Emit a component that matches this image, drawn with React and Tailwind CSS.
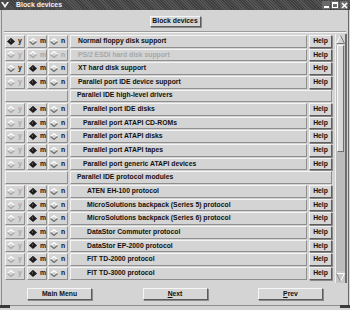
import React from 'react';

const rows = [
  { label: 'Normal floppy disk support', sel: 'y', yOn: true },
  { label: 'PS/2 ESDI hard disk support', sel: null, off: true },
  { label: 'XT hard disk support', sel: 'm', yOn: true },
  { label: 'Parallel port IDE device support', sel: 'm' },
  { header: 'Parallel IDE high-level drivers' },
  { label: 'Parallel port IDE disks', sel: 'm', lvl: 1 },
  { label: 'Parallel port ATAPI CD-ROMs', sel: 'm', lvl: 1 },
  { label: 'Parallel port ATAPI disks', sel: 'm', lvl: 1 },
  { label: 'Parallel port ATAPI tapes', sel: 'm', lvl: 1 },
  { label: 'Parallel port generic ATAPI devices', sel: 'm', lvl: 1 },
  { header: 'Parallel IDE protocol modules' },
  { label: 'ATEN EH-100 protocol', sel: 'm', lvl: 2 },
  { label: 'MicroSolutions backpack (Series 5) protocol', sel: 'm', lvl: 2 },
  { label: 'MicroSolutions backpack (Series 6) protocol', sel: 'm', lvl: 2 },
  { label: 'DataStor Commuter protocol', sel: 'm', lvl: 2 },
  { label: 'DataStor EP-2000 protocol', sel: 'm', lvl: 2 },
  { label: 'FIT TD-2000 protocol', sel: 'm', lvl: 2 },
  { label: 'FIT TD-3000 protocol', sel: 'm', lvl: 2 },
];

const indent = ['pl-[7px]', 'pl-[12px]', 'pl-[16px]'];

// motif-ish etched box
const box = 'border border-t-[#f4f4f4] border-l-[#f4f4f4] border-b-[#8e8e8e] border-r-[#8e8e8e]';

function Diamond({ on, dim }) {
  if (on) {
    return (
      <svg width="8" height="7" viewBox="0 0 8 7" className="shrink-0">
        <polygon points="4,0 8,3.5 4,7 0,3.5" fill="#1c1c1c" />
        <polyline points="0.5,3.5 4,0.5 7.5,3.5" fill="none" stroke="#3a3a3a" strokeWidth="1" />
        <rect x="3" y="2.5" width="1" height="1" fill="#8a8a8a" />
      </svg>
    );
  }
  return (
    <svg width="8" height="7" viewBox="0 0 8 7" className="shrink-0">
      <polygon points="4,0.5 7.5,3.5 4,6.5 0.5,3.5" fill="#d4d4d4" />
      <polyline points="0.5,3.5 4,0.5 7.5,3.5" fill="none" stroke="#ffffff" strokeWidth="1.1" />
      <polyline points="0.5,3.5 4,6.5 7.5,3.5" fill="none" stroke={dim ? '#a4a4a4' : '#6c6c6c'} strokeWidth="1.1" />
    </svg>
  );
}

function Opt({ letter, on, dim }) {
  return (
    <div className={`w-[20px] shrink-0 flex items-center gap-[3px] pl-[1px] ${box}`}>
      <Diamond on={on} dim={dim} />
      <span className={dim ? 'text-[#a6a6a6]' : 'text-[#111]'}>{letter}</span>
    </div>
  );
}

function Btn({ children, className = '' }) {
  return (
    <div
      className={`shrink-0 flex items-center justify-center bg-[#d6d6d6] border border-t-[#f6f6f6] border-l-[#f6f6f6] border-b-[#5c5c5c] border-r-[#5c5c5c] shadow-[1px_1px_0_#8a8a8a] text-[#111] ${className}`}
    >
      {children}
    </div>
  );
}

export default function App() {
  return (
    <div className="w-[350px] h-[310px] bg-[#d4d4d4] flex flex-col overflow-hidden font-['Liberation_Sans',Arial,sans-serif] font-bold text-[6.8px] leading-none select-none">
      {/* title bar */}
      <div className="h-[10px] shrink-0 flex items-center bg-[repeating-linear-gradient(45deg,#3e3e3e_0,#3e3e3e_1px,#575757_1px,#575757_2px)]">
        <div className="w-[10px] h-[10px] flex items-center justify-center bg-[#4a4a4a]">
          <svg width="8" height="6" viewBox="0 0 8 6">
            <polygon points="0,0 2,0 4,3 6,0 8,0 4,6" fill="#f4f4f4" />
          </svg>
        </div>
        <span className="ml-[5px] text-[#f2f2f2] text-[6.9px] bg-[#4a4a4a] px-[1px]">Block devices</span>
        <div className="ml-auto flex gap-[1px] mr-[2px]">
          <div className="w-[8px] h-[8px] bg-[#6a6a6a] flex items-end justify-center pb-[1px]">
            <div className="w-[5px] h-[2px] bg-white" />
          </div>
          <div className="w-[8px] h-[8px] bg-[#6a6a6a] flex items-center justify-center">
            <div className="w-[6px] h-[6px] border border-white border-t-2" />
          </div>
          <div className="w-[8px] h-[8px] bg-[#6a6a6a] flex items-center justify-center">
            <svg width="7" height="7" viewBox="0 0 7 7">
              <path d="M1 1 L6 6 M6 1 L1 6" stroke="#fff" strokeWidth="1.6" />
            </svg>
          </div>
        </div>
      </div>

      <div className="flex-1 flex flex-col border-l border-r border-l-[#8c8c8c] border-r-[#6a6a6a] mx-[1px]">
        {/* top button */}
        <div className="flex justify-center mt-[6px]">
          <Btn className="w-[51px] h-[11px]">Block devices</Btn>
        </div>
        <div className="mt-[4px] border-t border-t-[#9a9a9a] border-b border-b-[#f4f4f4] mx-[2px]" />

        {/* rows + scrollbar */}
        <div className="flex mt-[1px] h-[249px] pl-[3px] pr-[1px]">
          <div className="flex-1 min-w-0 flex flex-col gap-[1px] pt-[1px]">
            {rows.map((r, i) =>
              r.header ? (
                <div key={i} className="h-[12.65px] shrink-0 flex gap-[2px]">
                  <div className={`w-[63px] shrink-0 ${box}`} />
                  <div className={`flex-1 flex items-center pl-[6px] text-[#111] ${box}`}>
                    {r.header}
                  </div>
                </div>
              ) : (
                <div key={i} className="h-[12.65px] shrink-0 flex">
                  <Opt letter="y" on={r.sel === 'y'} dim={r.off || !r.yOn} />
                  <div className="w-[2px] shrink-0" />
                  <Opt letter="m" on={r.sel === 'm'} dim={r.off} />
                  <div className="w-[1px] shrink-0" />
                  <Opt letter="n" on={false} dim={r.off} />
                  <div className="w-[2px] shrink-0" />
                  <div
                    className={`flex-1 min-w-0 flex items-center ${indent[r.lvl || 0]} ${r.off ? 'text-[#a8a8a8]' : 'text-[#111]'} ${box} whitespace-nowrap overflow-hidden`}
                  >
                    {r.label}
                  </div>
                  <div className="w-[2px] shrink-0" />
                  <Btn className="w-[23px] h-full">Help</Btn>
                </div>
              )
            )}
          </div>

          {/* scrollbar */}
          <div className="w-[12px] shrink-0 ml-[3px] flex flex-col bg-[#bcbcbc] border-l border-l-[#f0f0f0] border-r-2 border-r-[#6e6e6e]">
            <div className="h-[11px] flex items-center justify-center bg-[#d4d4d4]">
              <svg width="9" height="9" viewBox="0 0 9 9">
                <polygon points="4.5,0.5 8.5,8.5 0.5,8.5" fill="#d4d4d4" />
                <polyline points="0.5,8.5 4.5,0.5" stroke="#ffffff" fill="none" />
                <polyline points="4.5,0.5 8.5,8.5 0.5,8.5" stroke="#7a7a7a" fill="none" />
              </svg>
            </div>
            <div className="h-[107px] mx-[1px] bg-[#d8d8d8] border border-t-[#fafafa] border-l-[#fafafa] border-b-[#6e6e6e] border-r-[#6e6e6e]" />
            <div className="flex-1" />
            <div className="h-[12px] flex items-center justify-center bg-[#c4c4c4]">
              <svg width="9" height="9" viewBox="0 0 9 9">
                <polygon points="0.5,0.5 8.5,0.5 4.5,8.5" fill="#c8c8c8" />
                <polyline points="0.5,0.5 8.5,0.5 4.5,8.5" stroke="#ffffff" fill="none" />
                <polyline points="4.5,8.5 0.5,0.5" stroke="#8a8a8a" fill="none" />
              </svg>
            </div>
          </div>
        </div>

        {/* bottom buttons */}
        <div className="flex justify-between px-[25px] mt-[5px]">
          <Btn className="w-[65px] h-[12px]">Main Menu</Btn>
          <Btn className="w-[65px] h-[12px]">
            <span><span className="underline">N</span>ext</span>
          </Btn>
          <Btn className="w-[65px] h-[12px]">
            <span><span className="underline">P</span>rev</span>
          </Btn>
        </div>
        <div className="flex-1" />
      </div>

      {/* bottom frame */}
      <div className="h-[5px] shrink-0 flex items-start">
        <div className="w-[10px] h-[3px] bg-[#3a3a3a]" />
        <div className="flex-1 h-[1px] bg-[#8c8c8c]" />
        <div className="w-[10px] h-[3px] bg-[#3a3a3a]" />
      </div>
    </div>
  );
}
